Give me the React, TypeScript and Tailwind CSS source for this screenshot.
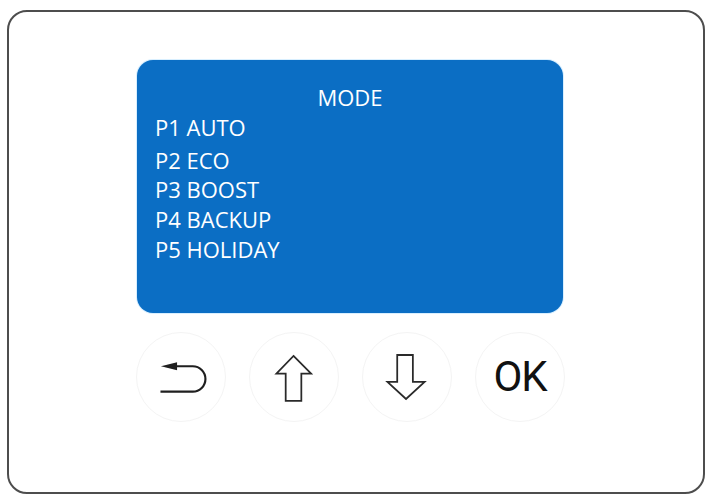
import React from "react";

const modes = [
  { label: "P1 AUTO", mt: "mt-0" },
  { label: "P2 ECO", mt: "mt-[3px]" },
  { label: "P3 BOOST", mt: "-mt-[1px]" },
  { label: "P4 BACKUP", mt: "mt-0" },
  { label: "P5 HOLIDAY", mt: "mt-0" },
];

function BackIcon() {
  return (
    <svg width="90" height="90" viewBox="0 0 90 90" fill="none">
      <path d="M24 60 H57 A13 13 0 0 0 57 34 H39" stroke="#1f1f1f" strokeWidth="2.2" />
      <polygon points="24.5,34 41,30 41,38" fill="#1f1f1f" />
    </svg>
  );
}

function UpIcon() {
  return (
    <svg width="90" height="90" viewBox="0 0 90 90" fill="none">
      <polygon
        points="44.5,23.5 62.5,41.5 52.5,41.5 52.5,69.5 36.5,69.5 36.5,41.5 27,41.5"
        stroke="#2a2a2a"
        strokeWidth="1.8"
        strokeLinejoin="miter"
      />
    </svg>
  );
}

function DownIcon() {
  return (
    <svg width="90" height="90" viewBox="0 0 90 90" fill="none">
      <polygon
        points="35,22.5 51,22.5 51,50 63,50 44,67.5 25,50 35,50"
        stroke="#2a2a2a"
        strokeWidth="1.8"
        strokeLinejoin="miter"
      />
    </svg>
  );
}

function RoundKey({ children }: { children: React.ReactNode }) {
  return (
    <div className="w-[90px] h-[90px] rounded-full border border-[#f4f4f4] flex items-center justify-center">
      {children}
    </div>
  );
}

export default function App() {
  return (
    <div className="w-[707px] h-[495px] bg-white pt-[10px] pl-[7px] font-['Open_Sans',sans-serif]">
      <div className="w-[698px] h-[484px] border-2 border-[#4d4d4d] rounded-[20px] pl-[128px] pt-[48px]">
        <div className="w-[426px] h-[253px] rounded-[16px] bg-[#0b6ec4] pt-[22px] pl-[18px] text-white text-[22px] leading-[30px] shadow-[0_0_0_1px_#d8efff]">
          <div className="text-center pr-[18px]">MODE</div>
          {modes.map((m) => (
            <div key={m.label} className={m.mt}>
              {m.label}
            </div>
          ))}
        </div>

        <div className="flex gap-[23px] mt-[19px] -ml-[1px]">
          <RoundKey>
            <BackIcon />
          </RoundKey>
          <RoundKey>
            <UpIcon />
          </RoundKey>
          <RoundKey>
            <DownIcon />
          </RoundKey>
          <RoundKey>
            <span className="font-['Roboto',sans-serif] font-normal text-[42px] leading-none tracking-[-1px] text-[#111]">
              OK
            </span>
          </RoundKey>
        </div>
      </div>
    </div>
  );
}
